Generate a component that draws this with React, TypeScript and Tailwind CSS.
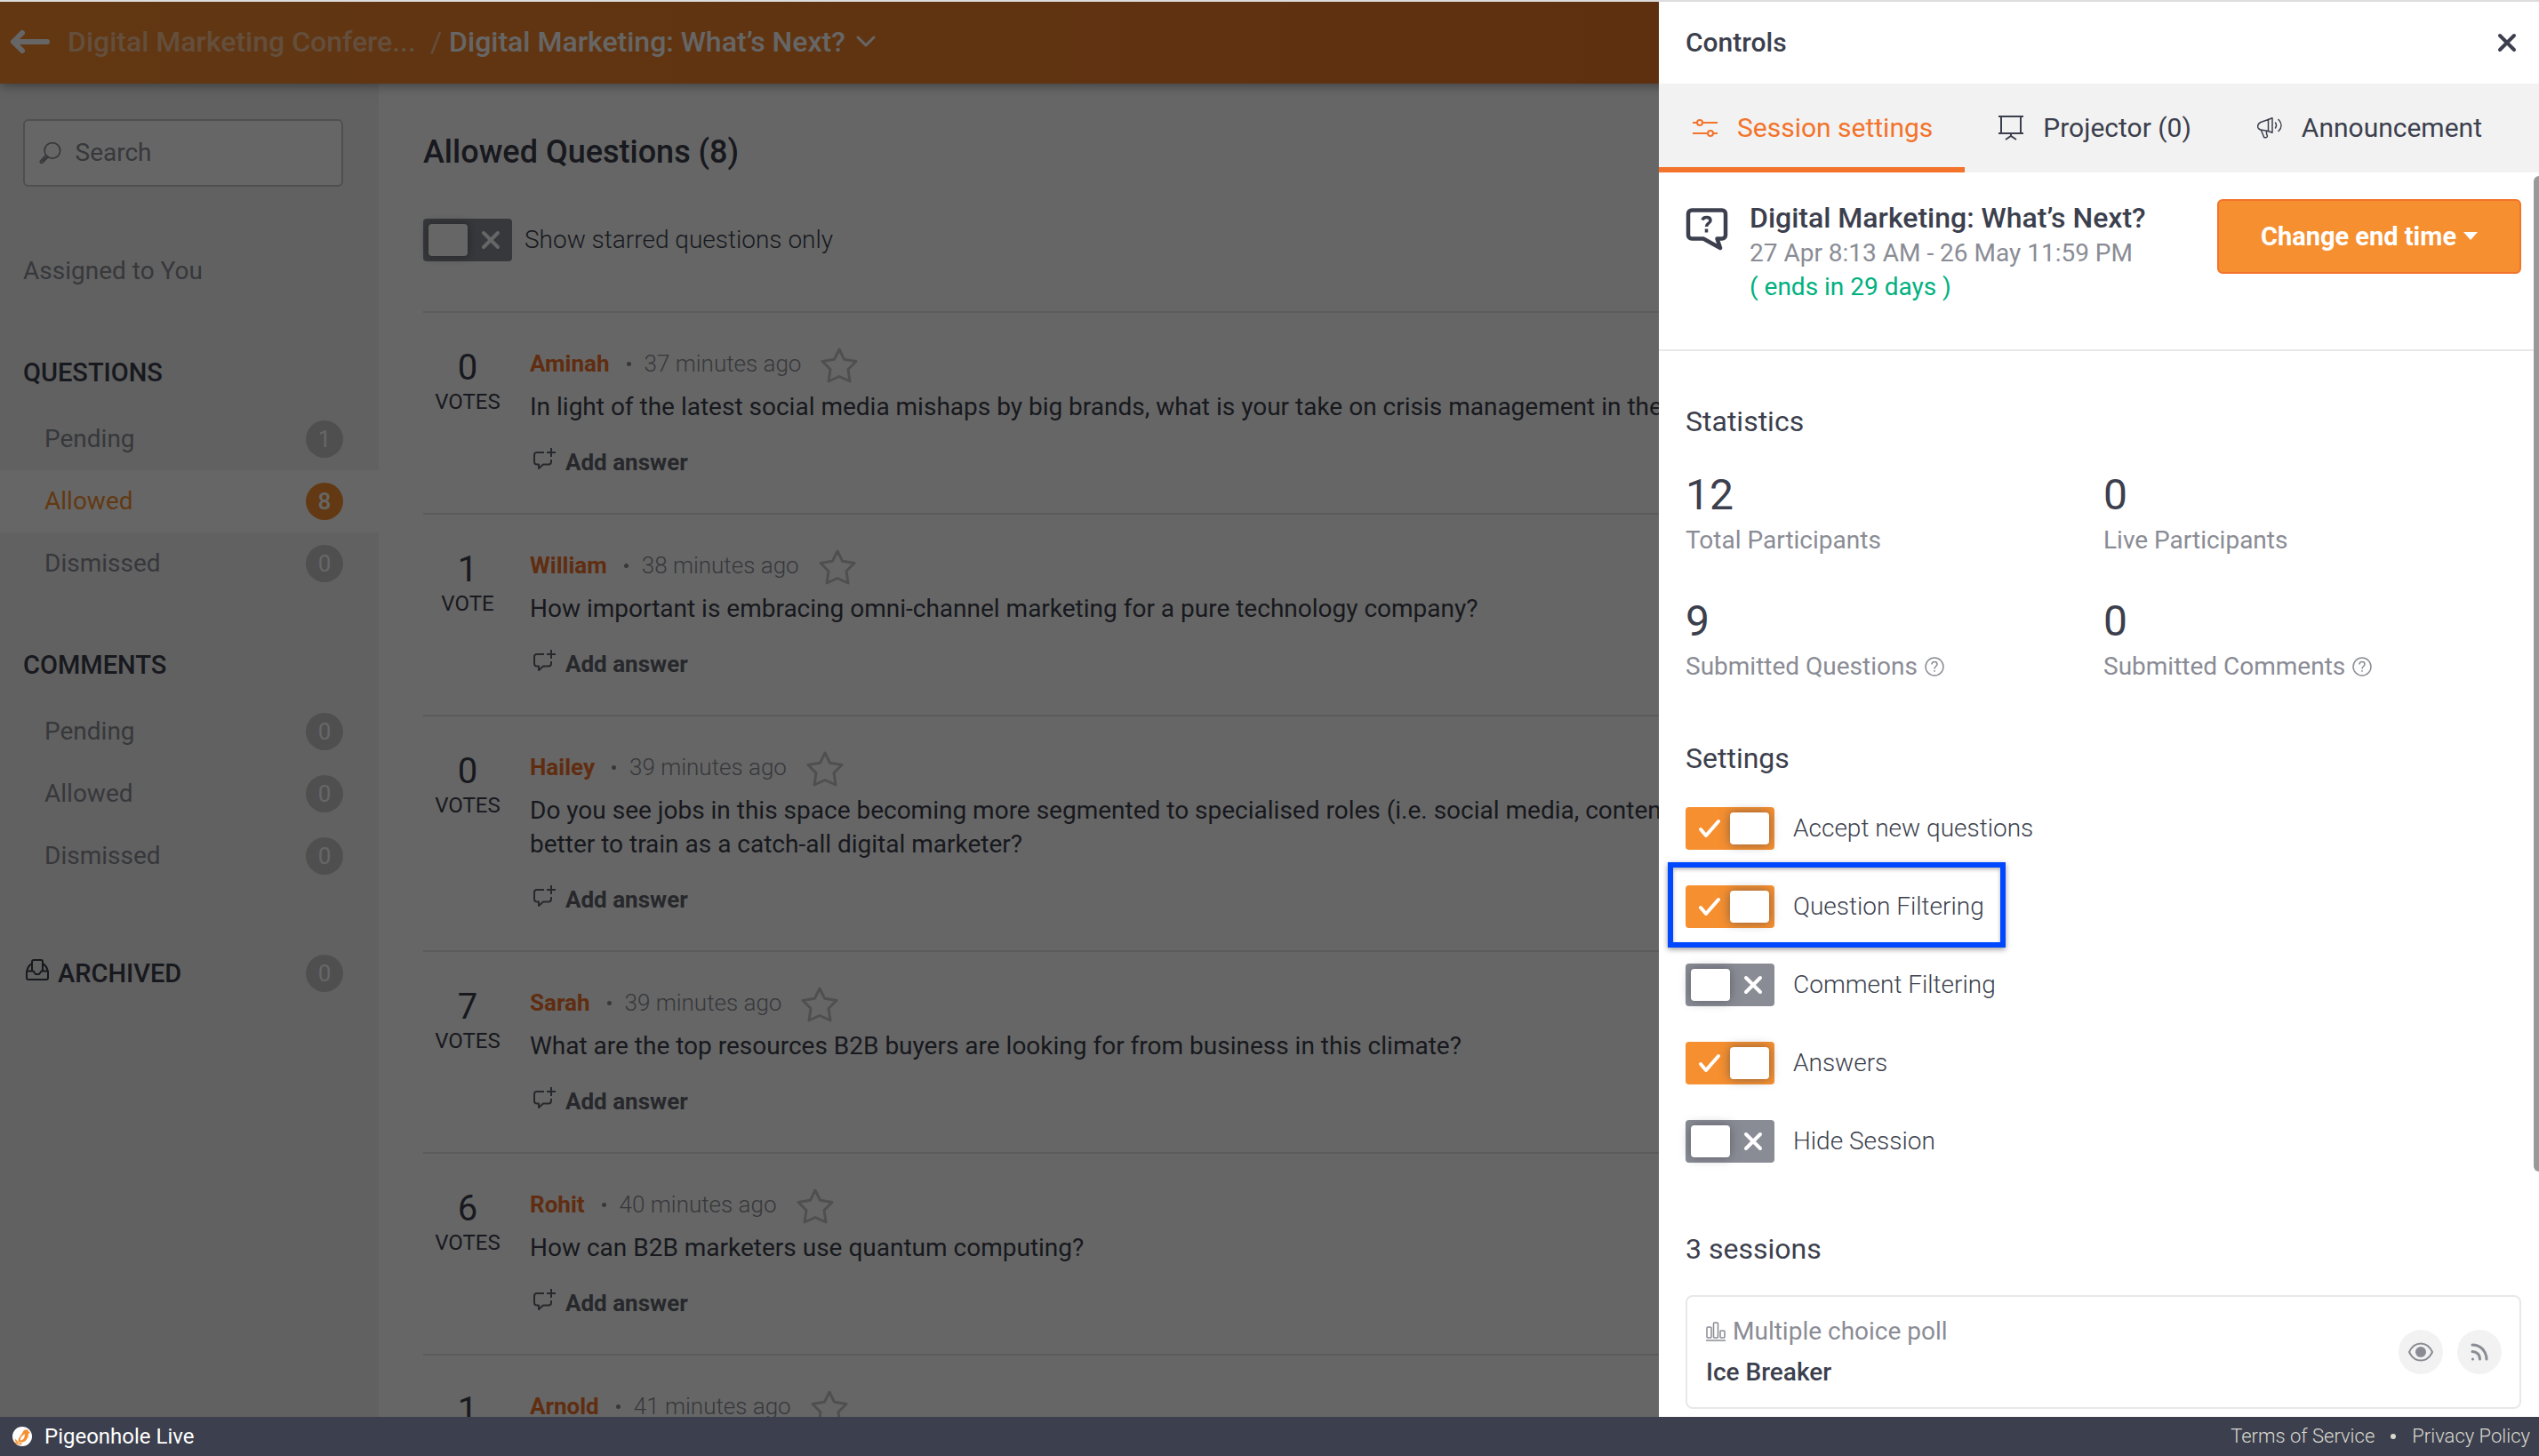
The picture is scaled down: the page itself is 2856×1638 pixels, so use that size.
import React, { useState } from 'react';

interface Question {
  id: number;
  votes: number;
  author: string;
  time: string;
  text: string;
}

interface NavItem {
  label: string;
  count: number;
}

interface Setting {
  label: string;
  on: boolean;
  highlighted?: boolean;
}

const questions: Question[] = [
  {
    id: 1,
    votes: 0,
    author: 'Aminah',
    time: '37 minutes ago',
    text: 'In light of the latest social media mishaps by big brands, what is your take on crisis management in the',
  },
  {
    id: 2,
    votes: 1,
    author: 'William',
    time: '38 minutes ago',
    text: 'How important is embracing omni-channel marketing for a pure technology company?',
  },
  {
    id: 3,
    votes: 0,
    author: 'Hailey',
    time: '39 minutes ago',
    text: 'Do you see jobs in this space becoming more segmented to specialised roles (i.e. social media, content\nbetter to train as a catch-all digital marketer?',
  },
  {
    id: 4,
    votes: 7,
    author: 'Sarah',
    time: '39 minutes ago',
    text: 'What are the top resources B2B buyers are looking for from business in this climate?',
  },
  {
    id: 5,
    votes: 6,
    author: 'Rohit',
    time: '40 minutes ago',
    text: 'How can B2B marketers use quantum computing?',
  },
  { id: 6, votes: 1, author: 'Arnold', time: '41 minutes ago', text: '' },
];

const questionNav: NavItem[] = [
  { label: 'Pending', count: 1 },
  { label: 'Allowed', count: 8 },
  { label: 'Dismissed', count: 0 },
];

const commentNav: NavItem[] = [
  { label: 'Pending', count: 0 },
  { label: 'Allowed', count: 0 },
  { label: 'Dismissed', count: 0 },
];

const stats = [
  { value: 12, label: 'Total Participants', help: false },
  { value: 0, label: 'Live Participants', help: false },
  { value: 9, label: 'Submitted Questions', help: true },
  { value: 0, label: 'Submitted Comments', help: true },
];

const settings: Setting[] = [
  { label: 'Accept new questions', on: true },
  { label: 'Question Filtering', on: true, highlighted: true },
  { label: 'Comment Filtering', on: false },
  { label: 'Answers', on: true },
  { label: 'Hide Session', on: false },
];

const BackIcon = () => (
  <svg className="h-[30px] w-[48px]" viewBox="0 0 48 30" fill="none" stroke="currentColor" strokeWidth="6" strokeLinecap="round" strokeLinejoin="round">
    <path d="M43 15H5M15 5L5 15l10 10" />
  </svg>
);

const ChevronIcon = () => (
  <svg className="h-[14px] w-[22px]" viewBox="0 0 22 14" fill="none" stroke="currentColor" strokeWidth="3" strokeLinecap="round" strokeLinejoin="round">
    <path d="M2 2l9 9 9-9" />
  </svg>
);

const SearchIcon = () => (
  <svg className="h-[28px] w-[28px]" viewBox="0 0 28 28" fill="none" stroke="currentColor" strokeWidth="2">
    <circle cx="17" cy="11" r="10" />
    <path d="M9 17l-7 7a1.8 1.8 0 0 0 0 2.4 1.8 1.8 0 0 0 2.5 0l7-7M9 17l2.5 2.4M4 25l5-5" />
  </svg>
);

const InboxIcon = () => (
  <svg className="mb-2 h-[24px] w-[26px]" viewBox="0 0 26 24" fill="none" stroke="currentColor" strokeWidth="2" strokeLinejoin="round">
    <path d="M7 13V3a2 2 0 0 1 2-2h8a2 2 0 0 1 2 2v10" />
    <path d="M7 5C4 6.500 2 10 1 14v7a2 2 0 0 0 2 2h20a2 2 0 0 0 2-2v-7c-1-4-3-7.500-6-9" />
    <path d="M1 13.500h7.500L11 17h4l2.500-3.500H25" />
  </svg>
);

const StarIcon = () => (
  <svg className="h-[40px] w-[42px]" viewBox="0 0 42 40" fill="none" stroke="currentColor" strokeWidth="3" strokeLinejoin="round">
    <path d="M21 2l5.500 11.200L40 15.500 31 24.500 33 38 21 32.500 9 38l2-13.500L2 15.500l13.500-2.300z" />
  </svg>
);

const AddAnswerIcon = () => (
  <svg className="mb-2 h-[24px] w-[25px]" viewBox="0 0 25 24" fill="none" stroke="currentColor" strokeWidth="2" strokeLinejoin="round">
    <path d="M12 5H4a3 3 0 0 0-3 3v7.500a3 3 0 0 0 3 3h2V23l5-4.500h6a3 3 0 0 0 3-3V13" />
    <path d="M20 0v10M15 5h10" />
  </svg>
);

const SlidersIcon = () => (
  <svg className="h-[28px] w-[28px]" viewBox="0 0 28 28" fill="none" stroke="currentColor" strokeWidth="2">
    <path d="M0 8h5M11 8h17M0 20h17M23 20h5" />
    <circle cx="8" cy="8" r="3" />
    <circle cx="20" cy="20" r="3" />
  </svg>
);

const ProjectorIcon = () => (
  <svg className="h-[28px] w-[28px]" viewBox="0 0 28 28" fill="none" stroke="currentColor" strokeWidth="2">
    <path d="M0 1h28M3 1v18M25 1v18M0 20h28M14 20v3M8 27l6-4 6 4" />
  </svg>
);

const MegaphoneIcon = () => (
  <svg className="h-[28px] w-[28px]" viewBox="0 0 28 28" fill="none" stroke="currentColor" strokeWidth="1.500" strokeLinecap="round" strokeLinejoin="round">
    <path d="M12.500 4.500L4 7.500C-.5 9.500-.5 15 4 16l8.500 1.500z" />
    <path d="M12.500 4.500L17 2.800V19.200l-4.500-1.700" />
    <path d="M4.500 16.500l3 7.500c1 1.500 4 .8 4-1l-1-2.500 0-3" />
    <path d="M20.500 8c1.200 1.800 1.200 4.200 0 6M24 4.500c4 4 4 9 0 13" />
  </svg>
);

const SessionIcon = () => (
  <svg className="h-[48px] w-[48px] shrink-0" viewBox="0 0 48 48" fill="none" stroke="currentColor" strokeWidth="4.500" strokeLinejoin="round">
    <path d="M20 34.500H7a4 4 0 0 1-4-4V6.500a4 4 0 0 1 4-4h34a4 4 0 0 1 4 4v24a4 4 0 0 1-4 4h-5.500L39 45 20 34.500z" />
    <path d="M19 13.500c.6-2.400 2.500-3 4.700-3 2.700 0 4.300 1.400 4.300 3.400 0 3.600-4.500 3-4.500 7.100M23.500 23.500v4" strokeWidth="3.500" />
  </svg>
);

const HelpIcon = () => (
  <svg className="h-[22px] w-[22px]" viewBox="0 0 22 22" fill="none" stroke="currentColor" strokeWidth="1.500">
    <circle cx="11" cy="11" r="10" />
    <path d="M8 8.500c0-2 1.300-3 3-3s3 1 3 2.700c0 2.300-3 2.500-3 5.300M11 15v1.800" />
  </svg>
);

const PollIcon = () => (
  <svg className="h-[22px] w-[22px]" viewBox="0 0 22 22" fill="none" stroke="currentColor" strokeWidth="1.500">
    <rect x="1" y="6" width="5" height="12" rx="1" />
    <rect x="8.500" y="1" width="5" height="17" rx="1" />
    <rect x="16" y="10" width="5" height="8" rx="1" />
    <path d="M0 21h22" />
  </svg>
);

const EyeIcon = () => (
  <svg className="h-[22px] w-[28px]" viewBox="0 0 28 22" fill="none" stroke="currentColor" strokeWidth="2">
    <path d="M1 11C4 4.500 8.500 1.500 14 1.500S24 4.500 27 11c-3 6.500-7.500 9.500-13 9.500S4 17.500 1 11z" />
    <circle cx="14" cy="11" r="6" fill="currentColor" stroke="none" />
  </svg>
);

const FeedIcon = () => (
  <svg className="h-[20px] w-[20px]" viewBox="0 0 20 20" fill="none" stroke="currentColor" strokeWidth="3" strokeLinecap="round">
    <path d="M2 2c9 0 16 7 16 16M2 9.500c5 0 8.500 3.500 8.500 8.500" />
    <circle cx="2.500" cy="18" r="1.500" fill="currentColor" stroke="none" />
  </svg>
);

const LogoIcon = () => (
  <svg className="h-[22px] w-[22px]" viewBox="0 0 22 22">
    <circle cx="11" cy="11" r="11" fill="#fff" />
    <path d="M12 5.500c1.500-3 5.500-3 6-.3L20 7l-2 .8c0 5-3 9.700-7.500 9.700H6.500C6.500 12 9.500 10.500 12 5.500z" fill="#f68f2f" />
    <path d="M9 13.500c.5-2.500 3-3.500 4.500-5.500 1 3-.5 7-4.500 7.500z" fill="#fff" />
    <path d="M3 14.500l3 3.500M2.500 17.500c2.500 2 5 2.500 8 1.500" stroke="#f68f2f" strokeWidth="1.500" fill="none" />
  </svg>
);

const Toggle = ({ label, on, highlighted }: Setting) => {
  const [checked, setChecked] = useState(on);

  return (
    <label className="relative flex cursor-pointer items-center self-start text-[28px] leading-[38px] font-light">
      <input type="checkbox" className="sr-only" checked={checked} onChange={() => setChecked(!checked)} />
      <span
        className={
          checked
            ? 'flex h-[48px] w-[100px] items-center justify-between rounded-[4px] bg-[#f68f2f] pr-[6px] pl-[14px]'
            : 'flex h-[48px] w-[100px] flex-row-reverse items-center justify-between rounded-[4px] bg-[#8a8c95] pr-[13px] pl-[6px]'
        }
      >
        {checked ? (
          <svg className="h-[22px] w-[26px]" viewBox="0 0 26 22" fill="none" stroke="#fff" strokeWidth="4" strokeLinecap="round" strokeLinejoin="round">
            <path d="M3 12l6 7L23 3" />
          </svg>
        ) : (
          <svg className="h-[22px] w-[22px]" viewBox="0 0 22 22" fill="none" stroke="#fff" strokeWidth="4" strokeLinecap="round">
            <path d="M3 3l16 16M19 3L3 19" />
          </svg>
        )}
        <span className="h-[36px] w-[44px] rounded-[4px] bg-white shadow-[0_0_12px_rgba(60,63,77,0.6)]" />
      </span>
      <span className="ml-(--label-gap)">{label}</span>
      {highlighted && (
        <span className="absolute -top-[26px] -right-[24px] -bottom-[22px] -left-[20px] border-[6px] border-[#0048ff] shadow-[0_2px_6px_rgba(0,0,0,0.4),inset_0_2px_4px_rgba(0,0,0,0.3)]" />
      )}
    </label>
  );
};

const Badge = ({ count, active }: { count: number; active?: boolean }) => (
  <span
    className={
      active
        ? 'flex h-[42px] w-[42px] items-center justify-center rounded-full bg-[#f68f2f] text-[26px] leading-none font-medium text-white'
        : 'flex h-[42px] w-[42px] items-center justify-center rounded-full bg-[#c5c5c7] text-[26px] leading-none font-normal text-white'
    }
  >
    {count}
  </span>
);

const NavSection = ({ title, items, active }: { title: string; items: NavItem[]; active?: string }) => (
  <section className="mt-[60px] first-of-type:mt-[76px]">
    <h2 className="mb-[21px] pl-[26px] text-[29px] leading-[38px] font-medium">{title}</h2>
    {items.map((item) => (
      <a
        key={item.label}
        href="#"
        className={
          item.label === active
            ? 'flex h-[70px] items-center justify-between bg-white pr-10 pl-[50px] text-[#f68f2f]'
            : 'flex h-[70px] items-center justify-between pr-10 pl-[50px] text-[#8a8c95]'
        }
      >
        <span className="text-[28px] leading-[38px]">{item.label}</span>
        <Badge count={item.count} active={item.label === active} />
      </a>
    ))}
  </section>
);

const QuestionRow = ({ question }: { question: Question }) => (
  <article className="flex gap-5 border-t-2 border-[#e4e4e4] py-[38px]">
    <div className="w-[100px] shrink-0 text-center">
      <div className="text-[40px] leading-[48px]">{question.votes}</div>
      <div className="text-[24px] leading-[28px]">{question.votes === 1 ? 'VOTE' : 'VOTES'}</div>
    </div>
    <div>
      <div className="flex h-[38px] items-center text-[26px] leading-[38px]">
        <span className="font-bold text-[#f07029]">{question.author}</span>
        <span className="mr-[15px] ml-[19px] h-[5px] w-[5px] rounded-full bg-[#8a8c95]" />
        <span className="font-light text-[#8a8c95]">{question.time}</span>
        <button className="ml-[22px] pt-1 text-[#c5c5c7]" aria-label="Star question">
          <StarIcon />
        </button>
      </div>
      <p className="mt-[11px] text-[28px] leading-[38px] whitespace-pre-line">{question.text}</p>
      <button className="mt-[24px] flex items-center gap-[11px] pl-1 text-[26px] leading-[38px] font-bold text-[#63656f]">
        <AddAnswerIcon />
        Add answer
      </button>
    </div>
  </article>
);

const ControlsPanel = () => (
  <aside className="absolute inset-y-0 right-0 z-20 flex w-[990px] flex-col overflow-hidden bg-white">
    <div className="flex h-[92px] shrink-0 items-center justify-between pr-6 pl-[30px]">
      <h2 className="text-[30px] leading-[40px] font-medium">Controls</h2>
      <button aria-label="Close">
        <svg className="h-[24px] w-[24px]" viewBox="0 0 24 24" fill="none" stroke="currentColor" strokeWidth="4" strokeLinecap="round">
          <path d="M4 4l16 16M20 4L4 20" />
        </svg>
      </button>
    </div>

    <nav className="flex h-[100px] shrink-0 bg-[#f2f2f2] text-[30px] leading-[40px]">
      <button className="flex items-center gap-[22px] border-y-[6px] border-t-transparent border-b-[#f3732a] pr-[36px] pl-[38px] text-[#f3732a]">
        <SlidersIcon />
        Session settings
      </button>
      <button className="flex items-center gap-[22px] border-y-[6px] border-transparent pr-[36px] pl-[38px]">
        <ProjectorIcon />
        Projector (0)
      </button>
      <button className="flex items-center gap-[22px] border-y-[6px] border-transparent pr-[36px] pl-[38px]">
        <MegaphoneIcon />
        Announcement
      </button>
    </nav>

    <div className="relative min-h-0 flex-1">
      <div className="flex gap-6 border-b-2 border-[#e8e8e8] pt-[30px] pr-5 pb-[51px] pl-[30px]">
        <div className="pt-[10px]">
          <SessionIcon />
        </div>
        <div className="flex-1 text-[28px] leading-[38px]">
          <h3 className="text-[32px] leading-[42px] font-medium">Digital Marketing: What’s Next?</h3>
          <p className="text-[#8a8c95]">27 Apr 8:13 AM - 26 May 11:59 PM</p>
          <p className="text-[#00b17f]">( ends in 29 days )</p>
        </div>
        <button className="flex h-[84px] w-[342px] items-center justify-center gap-2 rounded-[6px] border-2 border-[#f3732a] bg-[#f68f2f] text-[29px] leading-[38px] font-bold text-white">
          Change end time
          <svg className="h-[10px] w-[16px]" viewBox="0 0 16 10" fill="currentColor">
            <path d="M0 0h16L8 9z" />
          </svg>
        </button>
      </div>

      <div className="pr-5 pl-[30px]">
        <h3 className="mt-[58px] text-[32px] leading-[42px]">Statistics</h3>
        <dl className="mt-[34px] grid grid-cols-2 gap-y-[44px]">
          {stats.map((stat) => (
            <div key={stat.label} className="flex flex-col-reverse gap-1">
              <dt className="flex items-center gap-2 text-[28px] leading-[38px] text-[#8a8c95]">
                {stat.label}
                {stat.help && <HelpIcon />}
              </dt>
              <dd className="text-[48px] leading-[56px]">{stat.value}</dd>
            </div>
          ))}
        </dl>

        <h3 className="mt-[63px] text-[32px] leading-[42px]">Settings</h3>
        <div className="mt-[34px] flex flex-col gap-10 [--label-gap:21px]">
          {settings.map((setting) => (
            <Toggle key={setting.label} {...setting} />
          ))}
        </div>

        <h3 className="mt-[76px] text-[32px] leading-[42px]">3 sessions</h3>
        <div className="mt-[31px] flex items-center justify-between rounded-[8px] border-2 border-[#e8e8e8] py-5 pr-5 pl-[21px] text-[28px] leading-[38px]">
          <div className="flex flex-col gap-2">
            <div className="flex items-center gap-2 text-[#8a8c95]">
              <PollIcon />
              Multiple choice poll
            </div>
            <div className="font-medium">Ice Breaker</div>
          </div>
          <div className="flex gap-4 text-[#8a8c95]">
            <button className="flex h-[50px] w-[50px] items-center justify-center rounded-full bg-[#f2f2f2]" aria-label="View session">
              <EyeIcon />
            </button>
            <button className="flex h-[50px] w-[50px] items-center justify-center rounded-full bg-[#f2f2f2]" aria-label="Broadcast session">
              <FeedIcon />
            </button>
          </div>
        </div>
      </div>

      {/* scroll thumb */}
      <div className="absolute top-1 right-0 h-4/5 w-[6px] rounded-l-full bg-[#999999]" />
    </div>
  </aside>
);

const App: React.FC = () => {
  return (
    <div className="flex h-screen flex-col overflow-hidden border-t-2 border-[#dcdcdc] bg-white font-['Roboto',sans-serif] text-[#3c3f4d]">
      <div className="relative flex min-h-0 flex-1 flex-col">
        <header className="relative z-10 flex h-[92px] shrink-0 items-center bg-linear-to-r from-[#f48a2e] to-[#ea6f28] pb-[2px] pl-[10px] text-[32px] leading-[42px] font-medium text-white shadow-[0_2px_12px_rgba(0,0,0,0.4)]">
          <button aria-label="Back">
            <BackIcon />
          </button>
          <a href="#" className="ml-[18px] text-white/50">
            Digital Marketing Confere...
          </a>
          <span className="mr-2 ml-4 font-normal text-white/50">/</span>
          <button className="flex items-center gap-3">
            Digital Marketing: What’s Next?
            <ChevronIcon />
          </button>
        </header>

        <div className="flex min-h-0 flex-1 overflow-hidden">
          <nav className="w-[426px] shrink-0 bg-[#f2f2f2]">
            <div className="pt-10 pr-10 pl-[26px]">
              <label className="flex h-[76px] items-center gap-4 rounded-[6px] border-2 border-[#c5c5c7] bg-white px-4 text-[#8a8c95]">
                <SearchIcon />
                <input
                  type="text"
                  placeholder="Search"
                  aria-label="Search"
                  className="w-full min-w-0 bg-transparent text-[28px] leading-[38px] outline-none placeholder:text-[#8a8c95]"
                />
              </label>
            </div>
            <a href="#" className="mt-[76px] block pl-[26px] text-[28px] leading-[38px] text-[#8a8c95]">
              Assigned to You
            </a>
            <NavSection title="QUESTIONS" items={questionNav} active="Allowed" />
            <NavSection title="COMMENTS" items={commentNav} />
            <a href="#" className="mt-[76px] flex items-center pr-10 pl-[29px] text-[29px] leading-[38px] font-medium">
              <InboxIcon />
              <span className="ml-[10px] flex-1">ARCHIVED</span>
              <Badge count={0} />
            </a>
          </nav>

          <main className="min-w-0 flex-1 px-[50px]">
            <h1 className="mt-[56px] text-[36px] leading-[42px] font-medium">Allowed Questions (8)</h1>
            <div className="mt-[54px] mb-[56px] flex [--label-gap:14px]">
              <Toggle label="Show starred questions only" on={false} />
            </div>
            {questions.map((question) => (
              <QuestionRow key={question.id} question={question} />
            ))}
          </main>
        </div>

        <div className="absolute inset-0 z-10 bg-black/60" />
        <ControlsPanel />
      </div>

      <footer className="z-30 flex h-[44px] shrink-0 items-center justify-between bg-[#3c3f4d] pr-[10px] pl-[14px] text-[24px] leading-[32px]">
        <div className="flex items-center gap-[14px] text-white">
          <LogoIcon />
          Pigeonhole Live
        </div>
        <div className="flex items-center gap-[18px] text-[22px] font-light text-[#d8d8d0]">
          <a href="#">Terms of Service</a>
          <span className="h-[6px] w-[6px] rounded-full bg-[#d8d8d0]" />
          <a href="#">Privacy Policy</a>
        </div>
      </footer>
    </div>
  );
};

export default App;
